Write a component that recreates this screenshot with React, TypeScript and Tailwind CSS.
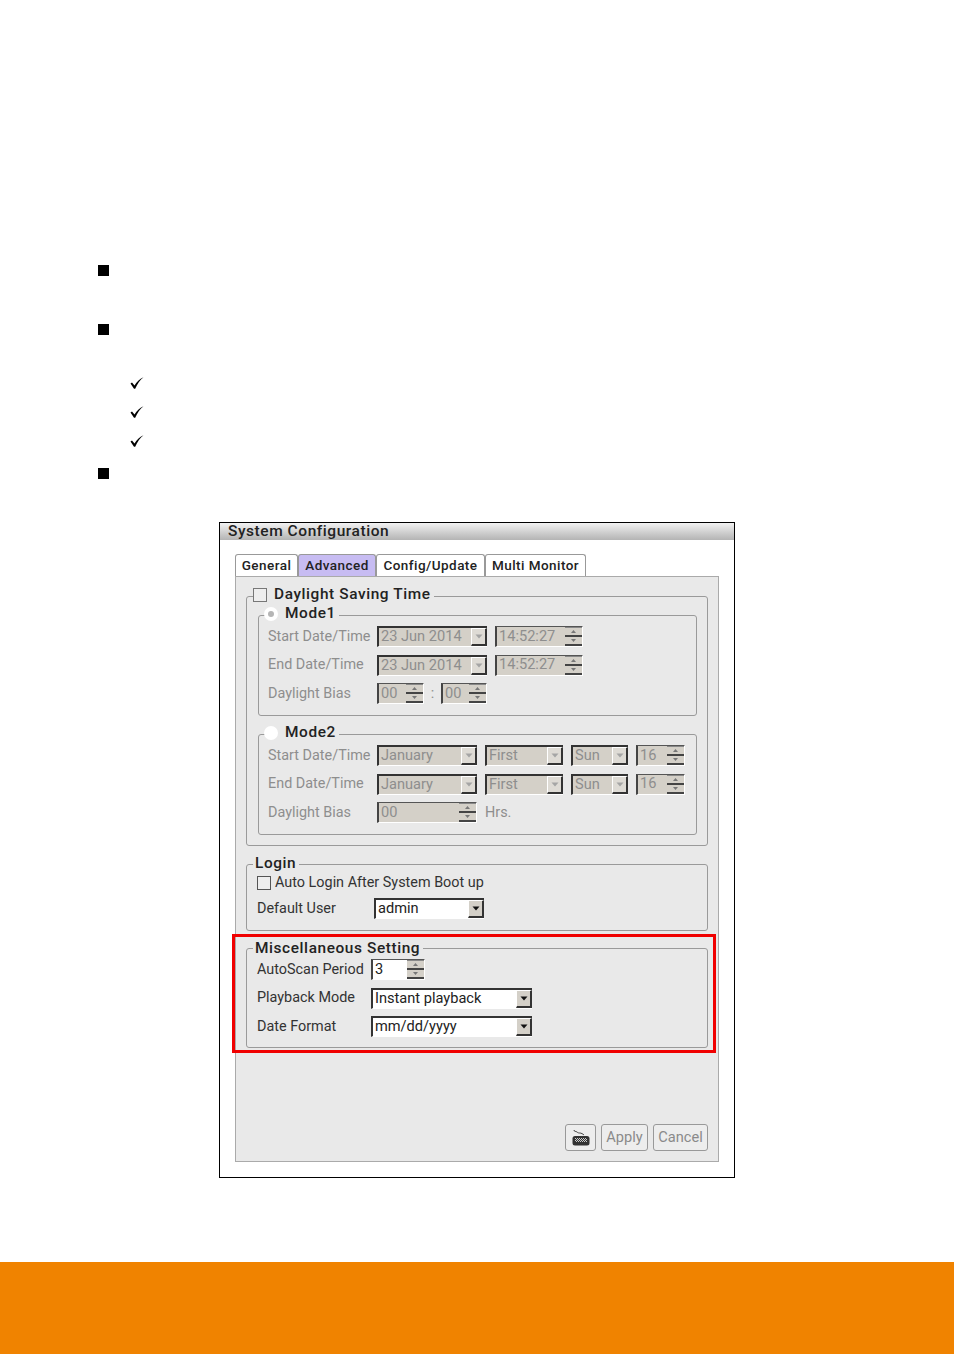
const ui = "[font-family:Roboto,'Liberation_Sans',sans-serif]"

function Arrow({ disabled }: { disabled?: boolean }) {
  return (
    <svg width="8" height="5" viewBox="0 0 8 5" aria-hidden>
      <path d="M0.5 0.5h7L4 4.5z" fill={disabled ? '#a5a5a5' : '#111'} />
    </svg>
  )
}

function Combo({ text, width, disabled }: { text: string; width: string; disabled?: boolean }) {
  return (
    <div
      className={`flex h-[21px] shrink-0 items-center justify-between border-t-2 border-b border-l-2 border-t-[#333] border-b-white border-l-[#333] pl-[2px] text-[14.6px] ${width} ${
        disabled ? 'bg-[#d4d0c8] text-[#8e8e8e]' : 'bg-white text-[#222]'
      }`}
    >
      <span className="whitespace-nowrap">{text}</span>
      <span
        className={`flex h-[18px] w-[16px] shrink-0 items-center justify-center border-t border-r-2 border-b-2 border-l border-t-white border-r-[#333] border-b-[#333] border-l-white ${
          disabled ? 'bg-[#dedbd5]' : 'bg-[#d4d0c8]'
        }`}
      >
        <Arrow disabled={disabled} />
      </span>
    </div>
  )
}

function SpinArrow({ up }: { up?: boolean }) {
  return (
    <svg width="5" height="3" viewBox="0 0 5 3" aria-hidden>
      <path d={up ? 'M2.5 0L5 3H0z' : 'M0 0h5L2.5 3z'} fill="#777" />
    </svg>
  )
}

function Spin({ text, width, disabled }: { text: string; width: string; disabled?: boolean }) {
  return (
    <div
      className={`flex h-[21px] shrink-0 items-stretch justify-between border-t border-r border-b border-l-2 border-t-[#555] border-r-white border-b-white border-l-[#444] pl-[2px] text-[14.6px] ${width} ${
        disabled ? 'bg-[#d4d0c8] text-[#8e8e8e]' : 'bg-white text-[#222]'
      }`}
    >
      <span className="self-center whitespace-nowrap">{text}</span>
      <span className="flex w-[17px] shrink-0 flex-col border-t border-[#888] bg-[#d4d0c8]">
        <span className="flex flex-1 items-center justify-center border-b-2 border-[#444]">
          <SpinArrow up />
        </span>
        <span className="flex flex-1 items-center justify-center border-b-2 border-[#444]">
          <SpinArrow />
        </span>
      </span>
    </div>
  )
}

function Label({ children, width, disabled }: { children: string; width: string; disabled?: boolean }) {
  return (
    <span className={`shrink-0 text-[14.4px] ${width} ${disabled ? 'text-[#8e8e8e]' : 'text-[#333]'}`}>
      {children}
    </span>
  )
}

function Row({ children }: { children: React.ReactNode }) {
  return <div className="flex h-[21px] items-center">{children}</div>
}

function Box() {
  return <span className="h-[14px] w-[14px] shrink-0 border border-[#555] bg-[#eeeeee]" />
}

function Group({
  legend,
  className,
  legendTop = '-top-[12px]',
  children,
}: {
  legend: React.ReactNode
  className: string
  legendTop?: string
  children: React.ReactNode
}) {
  return (
    <div className={`relative rounded-[3px] border border-[#9a9a9a] ${className}`}>
      <div
        className={`absolute left-[6px] flex h-[19px] items-center bg-[#e9e9e9] pr-[3px] pl-[2px] text-[15.4px] font-medium tracking-[0.6px] text-[#222] ${legendTop}`}
      >
        {legend}
      </div>
      {children}
    </div>
  )
}

function Tab({ label, width, active }: { label: string; width: string; active?: boolean }) {
  return (
    <div
      className={`flex h-[22px] items-center justify-center rounded-t-[3px] border border-b-0 border-[#999] text-[13.5px] font-medium tracking-[0.45px] text-[#222] ${width} ${
        active ? 'bg-[#c7bcf2]' : 'bg-white'
      }`}
    >
      {label}
    </div>
  )
}

function KeyboardIcon() {
  return (
    <svg width="18" height="17" viewBox="0 0 18 17" aria-hidden>
      <path d="M2 1c0 2 2 1 3 2s2 1 3 1 3 1 4 2" fill="none" stroke="#444" strokeWidth="1" />
      <rect x="0.5" y="7" width="17" height="9.5" rx="2.5" fill="#333" />
      <path d="M3 9.5h12M4 10.5h11M3 11.5h12M4 12.5h11" stroke="#ccc" strokeWidth="1" strokeDasharray="1 1" />
    </svg>
  )
}

function Btn({ children, width, dim }: { children: React.ReactNode; width: string; dim?: boolean }) {
  return (
    <div
      className={`flex h-[27px] items-center justify-center rounded-[3px] border border-[#999] bg-[#ededed] text-[14.6px] ${width} ${
        dim ? 'text-[#8a8a8a]' : ''
      }`}
    >
      {children}
    </div>
  )
}

function Check() {
  return (
    <svg width="14" height="12" viewBox="0 0 14 12" className="block" aria-hidden>
      <path d="M0.5 6.5L2 5.5L4.5 8.5C6.5 5.2 9.5 2 13.5 0.2C10 3 7.2 7 5.2 11.8H4L0.5 6.5z" fill="#000" />
    </svg>
  )
}

export default function App() {
  return (
    <div className={`flex h-[1354px] w-[954px] flex-col bg-white ${ui}`}>
      <div className="flex flex-col pt-[265px] pl-[98px]">
        <span className="h-[11px] w-[11px] bg-black" />
        <span className="mt-[48px] h-[11px] w-[11px] bg-black" />
        <div className="mt-[42px] ml-[32px] flex flex-col gap-[17px]">
          <Check />
          <Check />
          <Check />
        </div>
        <span className="mt-[21px] h-[11px] w-[11px] bg-black" />
      </div>

      <div className="mt-[43px] ml-[219px] h-[656px] w-[516px] border border-black bg-white">
        <div className="flex h-[17px] items-center bg-linear-to-b from-[#f2f2f2] to-[#b4b4b4] pl-[8px]">
          <span className="text-[15.5px] leading-none font-medium tracking-[0.55px] text-[#222]">
            System Configuration
          </span>
        </div>

        <div className="mt-[14px] ml-[15px] flex">
          <Tab label="General" width="w-[63px]" />
          <Tab label="Advanced" width="w-[78px]" active />
          <Tab label="Config/Update" width="w-[109px]" />
          <Tab label="Multi Monitor" width="w-[101px]" />
        </div>

        <div className="ml-[15px] flex h-[586px] w-[484px] flex-col border border-[#aaaaaa] bg-[#e9e9e9] pt-[19px] pl-[10px]">
          <Group
            className="h-[250px] w-[462px] pt-[18px] pl-[11px]"
            legend={
              <>
                <span className="mr-[7px] -ml-[2px] h-[14px] w-[14px] shrink-0 border border-[#777] bg-[#eeeeee]" />
                Daylight Saving Time
              </>
            }
          >
            <Group
              className="h-[101px] w-[439px] pt-[10px] pl-[9px]"
              legend={
                <>
                  <span className="mr-[7px] -ml-[3px] flex h-[14px] w-[14px] items-center justify-center rounded-full bg-white">
                    <span className="h-[6px] w-[6px] rounded-full bg-[#b5b5b5]" />
                  </span>
                  Mode1
                </>
              }
            >
              <div className="flex flex-col gap-[7.5px]">
                <Row>
                  <Label width="w-[109px]" disabled>Start Date/Time</Label>
                  <Combo text="23 Jun 2014" width="w-[110px]" disabled />
                  <span className="w-[8px]" />
                  <Spin text="14:52:27" width="w-[88px]" disabled />
                </Row>
                <Row>
                  <Label width="w-[109px]" disabled>End Date/Time</Label>
                  <Combo text="23 Jun 2014" width="w-[110px]" disabled />
                  <span className="w-[8px]" />
                  <Spin text="14:52:27" width="w-[88px]" disabled />
                </Row>
                <Row>
                  <Label width="w-[109px]" disabled>Daylight Bias</Label>
                  <Spin text="00" width="w-[47px]" disabled />
                  <span className="w-[17px] text-center text-[14.4px] text-[#8e8e8e]">:</span>
                  <Spin text="00" width="w-[46px]" disabled />
                </Row>
              </div>
            </Group>

            <Group
              className="mt-[18px] h-[101px] w-[439px] pt-[10px] pl-[9px]"
              legend={
                <>
                  <span className="mr-[7px] -ml-[3px] h-[14px] w-[14px] rounded-full bg-white" />
                  Mode2
                </>
              }
            >
              <div className="flex flex-col gap-[7.5px]">
                <Row>
                  <Label width="w-[109px]" disabled>Start Date/Time</Label>
                  <Combo text="January" width="w-[100px]" disabled />
                  <span className="w-[8px]" />
                  <Combo text="First" width="w-[78px]" disabled />
                  <span className="w-[8px]" />
                  <Combo text="Sun" width="w-[57px]" disabled />
                  <span className="w-[8px]" />
                  <Spin text="16" width="w-[49px]" disabled />
                </Row>
                <Row>
                  <Label width="w-[109px]" disabled>End Date/Time</Label>
                  <Combo text="January" width="w-[100px]" disabled />
                  <span className="w-[8px]" />
                  <Combo text="First" width="w-[78px]" disabled />
                  <span className="w-[8px]" />
                  <Combo text="Sun" width="w-[57px]" disabled />
                  <span className="w-[8px]" />
                  <Spin text="16" width="w-[49px]" disabled />
                </Row>
                <Row>
                  <Label width="w-[109px]" disabled>Daylight Bias</Label>
                  <Spin text="00" width="w-[100px]" disabled />
                  <span className="ml-[8px] text-[14.4px] text-[#8e8e8e]">Hrs.</span>
                </Row>
              </div>
            </Group>
          </Group>

          <Group
            className="mt-[18px] h-[67px] w-[462px] pt-[8px] pl-[10px]"
            legendTop="-top-[11px]"
            legend="Login"
          >
            <div className="flex h-[19px] items-center gap-[4px] text-[14.4px] text-[#333]">
              <Box />
              Auto Login After System Boot up
            </div>
            <div className="mt-[6px]">
              <Row>
                <Label width="w-[117px]">Default User</Label>
                <Combo text="admin" width="w-[110px]" />
              </Row>
            </div>
          </Group>

          <div className="mt-[3px] -ml-[14px] h-[119px] w-[484px] border-[3px] border-[#f00000] pt-[11px] pl-[11px]">
            <Group
              className="h-[100px] w-[462px] pt-[10px] pl-[10px]"
              legendTop="-top-[10px]"
              legend="Miscellaneous Setting"
            >
              <div className="flex flex-col gap-[7.5px]">
                <Row>
                  <Label width="w-[114px]">AutoScan Period</Label>
                  <Spin text="3" width="w-[54px]" />
                </Row>
                <Row>
                  <Label width="w-[114px]">Playback Mode</Label>
                  <Combo text="Instant playback" width="w-[161px]" />
                </Row>
                <Row>
                  <Label width="w-[114px]">Date Format</Label>
                  <Combo text="mm/dd/yyyy" width="w-[161px]" />
                </Row>
              </div>
            </Group>
          </div>

          <div className="mt-[71px] flex w-[462px] justify-end gap-[5px]">
            <Btn width="w-[31px]"><KeyboardIcon /></Btn>
            <Btn width="w-[47px]" dim>Apply</Btn>
            <Btn width="w-[55px]" dim>Cancel</Btn>
          </div>
        </div>
      </div>

      <div className="mt-auto h-[92px] bg-[#f08300]" />
    </div>
  )
}
